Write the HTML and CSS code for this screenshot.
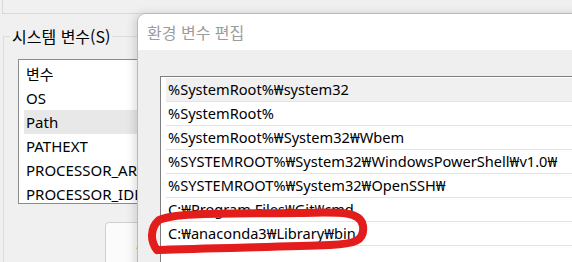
FILE: index.html
```html
<!DOCTYPE html>
<html lang="ko">
<head>
  <meta charset="UTF-8">
  <title>환경 변수 편집</title>
  <link rel="stylesheet" href="styles.css">
</head>
<body>

<div class="screen">
  <div class="back">
    <div class="user-box"></div>

    <fieldset class="group">
      <legend>시스템 변수(S)</legend>
      <div class="var-list">
        <div class="var-head">변수</div>
        <div class="var-row">OS</div>
        <div class="var-row selected">Path</div>
        <div class="var-row">PATHEXT</div>
        <div class="var-row">PROCESSOR_ARCHITECTURE</div>
        <div class="var-row">PROCESSOR_IDENTIFIER</div>
      </div>
      <div class="buttons">
        <button class="btn">새로 만들기(W)...</button>
      </div>
    </fieldset>
  </div>

  <div class="dialog">
    <div class="title">환경 변수 편집</div>
    <div class="dialog-body">
      <div class="path-list">
        <div class="path-row selected">%SystemRoot%₩system32</div>
        <div class="path-row">%SystemRoot%</div>
        <div class="path-row">%SystemRoot%₩System32₩Wbem</div>
        <div class="path-row">%SYSTEMROOT%₩System32₩WindowsPowerShell₩v1.0₩</div>
        <div class="path-row">%SYSTEMROOT%₩System32₩OpenSSH₩</div>
        <div class="path-row">C:₩Program Files₩Git₩cmd</div>
        <div class="path-row">C:₩anaconda3₩Library₩bin</div>
        <div class="path-row"></div>
      </div>
    </div>
  </div>

  <!-- red marker drawn over the screenshot -->
  <svg class="marker" width="572" height="262" viewBox="0 0 572 262">
    <path d="M157 250 C150 241 150 228 159 220 C175 212 230 214 300 213 C340 212 361 211 363 226 C365 241 354 244 330 245 C280 247 205 248 160 250"
          fill="none" stroke="#e31c1c" stroke-width="8" stroke-linecap="round" stroke-linejoin="round"/>
  </svg>
</div>

</body>
</html>
```

FILE: styles.css
```css
body {
  margin: 0;
  background-color: #f0f0f0;
  font-family: 'Noto Sans', 'Noto Sans CJK KR', sans-serif;
  color: #000;
}

.screen {
  position: relative;
  width: 572px;
  height: 262px;
  overflow: hidden;
}

.user-box {
  margin-left: 2px;
  height: 13px;
  border-left: 1px solid #d9d9d9;
  border-bottom: 1px solid #d9d9d9;
}

.group {
  margin: 11px 0 0 3px;
  padding: 0 0 0 6px;
  border: 1px solid #dcdcdc;
  border-right: none;
  height: 300px;
}

.group legend {
  padding: 0 2px;
  font-family: 'Noto Sans CJK KR', sans-serif;
  font-size: 16px;
  line-height: 22px;
}

.var-list {
  margin: 12px 0 0 8px;
  width: 200px;
  height: 142px;
  padding-top: 1px;
  background-color: #fff;
  border: 1px solid #8c8c8c;
  border-right: none;
  overflow: hidden;
  font-size: 15px;
}

.var-head {
  height: 25px;
  line-height: 25px;
  padding-left: 7px;
  font-family: 'Noto Sans CJK KR', sans-serif;
}

.var-row {
  height: 24px;
  line-height: 24px;
  margin-left: 5px;
  padding-left: 2px;
  white-space: nowrap;
}

.var-row.selected {
  background-color: #e8e8e8;
}

.buttons {
  margin: 18px 0 0 95px;
}

.btn {
  width: 110px;
  height: 44px;
  border: 1px solid #d0d0d0;
  border-radius: 4px;
  background-color: #fbfbfb;
  font-family: 'Noto Sans CJK KR', sans-serif;
  font-size: 14px;
  text-align: left;
  padding-left: 30px;
  white-space: nowrap;
}

.dialog {
  position: absolute;
  left: 137px;
  top: 13px;
  right: -10px;
  bottom: -10px;
  background-color: #efefef;
  border: 1px solid #b9b9b9;
  border-radius: 9px 0 0 0;
  box-shadow: -3px 0 8px rgba(0, 0, 0, 0.13);
  overflow: hidden;
}

.title {
  height: 36px;
  line-height: 36px;
  padding-left: 9px;
  background-color: #fff;
  color: #9c9c9c;
  font-family: 'Noto Sans CJK KR', sans-serif;
  font-size: 16px;
}

.dialog-body {
  padding: 26px 0 0 22px;
}

.path-list {
  background-color: #fff;
  border: 1px solid #7f7f7f;
  border-right: none;
  padding: 1px 0 0 5px;
  font-size: 14.6px;
}

.path-row {
  height: 23px;
  line-height: 23px;
  padding-left: 2px;
  border-bottom: 1px solid #e4e4e4;
  white-space: nowrap;
}

.path-row.selected {
  background-color: #f0f0f0;
}

.marker {
  position: absolute;
  left: 0;
  top: 0;
  pointer-events: none;
}
```
